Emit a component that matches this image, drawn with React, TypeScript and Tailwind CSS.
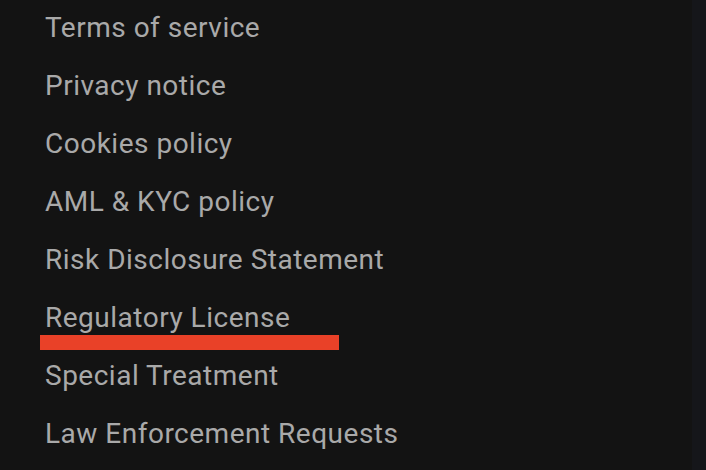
const links = [
  "Terms of service",
  "Privacy notice",
  "Cookies policy",
  "AML & KYC policy",
  "Risk Disclosure Statement",
  "Regulatory License",
  "Special Treatment",
  "Law Enforcement Requests",
];

export default function App() {
  return (
    <div className="flex h-[470px] w-[706px] overflow-hidden bg-[#131313]">
      <div className="flex-1">
        <ul className="-mt-[1px] pl-[45px] font-['Roboto',sans-serif] text-[28px] leading-[58px] tracking-[0.5px] text-[#a9a9a9]">
          {links.map((label) => (
            <li key={label} className="relative">
              <a href="#">{label}</a>
              {label === "Regulatory License" && (
                <span className="absolute left-[-5px] top-[46px] h-[15px] w-[299px] bg-[#e94128]" />
              )}
            </li>
          ))}
        </ul>
      </div>
      <div className="w-[14px] bg-[#15161a]" />
    </div>
  );
}
